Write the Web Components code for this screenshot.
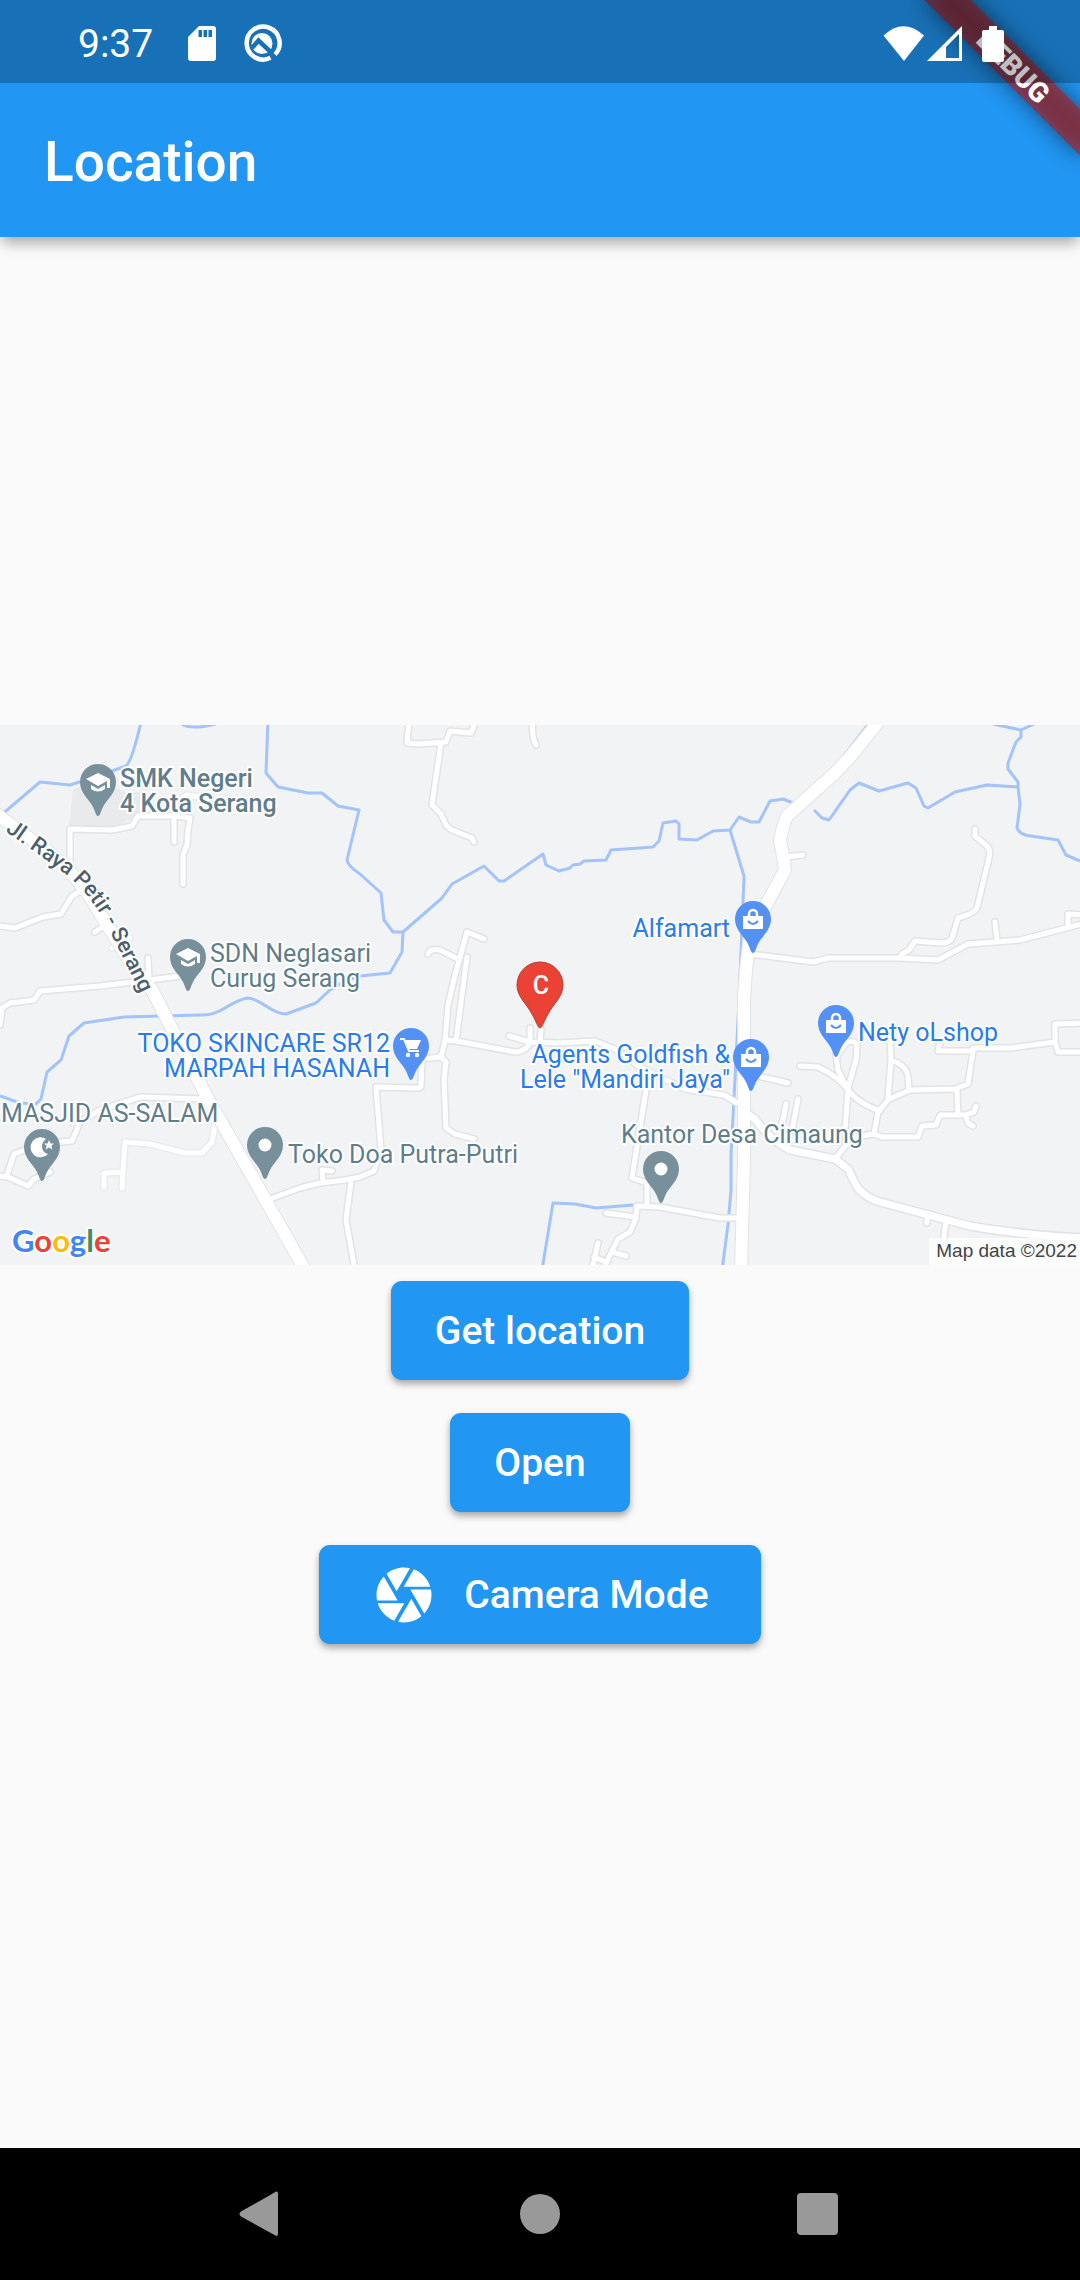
<!DOCTYPE html>
<html lang="en">
<head>
<meta charset="utf-8">
<meta name="viewport" content="width=device-width, initial-scale=1">
<title>Location</title>
<style>
  html, body { margin: 0; height: 100%; }
  body { font-family: Roboto, "Noto Sans", sans-serif; background: #fafafa; }
</style>
</head>
<body>
<location-page></location-page>
<script>
const define = (name, html) => {
  const template = document.createElement('template');
  template.innerHTML = html;
  customElements.define(name, class extends HTMLElement {
    constructor() {
      super();
      this.attachShadow({ mode: 'open' }).append(template.content.cloneNode(true));
    }
  });
};

define('status-bar', `
<style>
  :host { display: flex; align-items: center; justify-content: space-between; box-sizing: border-box;
          height: 83px; padding: 4px 76px 0 78px; color: #fff; background: rgba(0,0,0,.25); }
  .side { display: flex; align-items: center; }
  time { font-size: 39px; line-height: 44px; margin-right: 35px; }
  svg { display: block; fill: #fff; }
  .sd { margin-right: 26px; }
  .cell { margin: 0 20px 0 2px; }
</style>
<div class="side">
  <time>9:37</time>
  <svg class="sd" width="28" height="36" viewBox="0 0 28 36"><path fill-rule="evenodd" d="M11 0H25a3 3 0 0 1 3 3V32a3 3 0 0 1-3 3H3a3 3 0 0 1-3-3V11ZM10.500 4v7h3.500V4ZM15.500 4v7H19V4ZM20.500 4v7H24V4Z"/></svg>
  <svg width="40" height="40" viewBox="0 0 40 40">
    <mask id="slash"><rect width="40" height="40" fill="#fff"/><path d="M10 24L16.500 16.500L34 33" fill="none" stroke="#000" stroke-width="4.500"/></mask>
    <path fill="none" stroke="#fff" stroke-width="4.500" d="M33 30.500A16.500 16.500 0 1 0 28.500 33.800"/>
    <circle cx="20" cy="19.500" r="10.500" mask="url(#slash)"/>
  </svg>
</div>
<div class="side">
  <svg width="42" height="36" viewBox="0 0 42 36"><path d="M0.500 9.500Q20.500-9 41 9.500L21 35Z"/></svg>
  <svg class="cell" width="35" height="36" viewBox="0 0 35 36"><path fill-rule="evenodd" d="M35 0V35H0ZM32 8L19 21V32H32Z"/></svg>
  <svg width="22" height="36" viewBox="0 0 22 36"><path d="M7 0h8v4h5q2 0 2 2v28q0 2-2 2H2q-2 0-2-2V6q0-2 2-2h5Z"/></svg>
</div>`);

define('app-bar', `
<style>
  :host { display: flex; align-items: center; box-sizing: border-box; height: 154px; padding: 4px 44px 0; color: #fff; }
  h1 { margin: 0; font-size: 55px; line-height: 64px; font-weight: 500; }
</style>
<h1><slot></slot></h1>`);

define('debug-banner', `
<style>
  :host { display: block; width: 200px; height: 200px; overflow: hidden; pointer-events: none; }
  svg { display: block; }
  text { font: 900 28px Roboto, sans-serif; fill: #fff; text-anchor: middle; }
</style>
<svg width="200" height="200" viewBox="0 0 200 200">
  <defs><filter id="soft" x="-50%" y="-150%" width="200%" height="400%"><feGaussianBlur stdDeviation="11"/></filter></defs>
  <g transform="translate(200 0) rotate(45)">
    <rect x="-110" y="77" width="220" height="33" opacity=".5" filter="url(#soft)"/>
    <rect x="-120" y="77" width="240" height="33" fill="#b71c1c" fill-opacity=".627"/>
    <text x="0" y="104">DEBUG</text>
  </g>
</svg>`);

define('raised-button', `
<style>
  :host { display: block; }
  button { display: flex; align-items: center; justify-content: center; box-sizing: border-box; height: 99px;
           padding: 0 44px; border: 0; border-radius: 11px; background: #2196f3; color: #fff;
           font: 500 39px/46px Roboto, sans-serif; box-shadow: 0 4px 7px rgba(0,0,0,.34); cursor: pointer; }
  ::slotted(svg) { display: block; margin: 0 27px 0 8px; fill: #fff; }
  ::slotted(span) { margin-right: 8px; }
</style>
<button type="button"><slot></slot></button>`);

define('nav-bar', `
<style>
  :host { display: flex; align-items: center; justify-content: center; gap: 146px; height: 132px; background: #000; }
  button { display: flex; align-items: center; justify-content: center; width: 132px; height: 132px; border: 0;
           padding: 0; background: none; }
  svg { display: block; fill: #999; }
</style>
<button type="button" aria-label="Back"><svg width="48" height="48" viewBox="0 0 48 48"><path d="M36.500 2.500Q40 0 40 4V43.500Q40 47.500 36.500 45L3 26.500Q0 24 3 21.500Z"/></svg></button>
<button type="button" aria-label="Home"><svg width="48" height="48" viewBox="0 0 48 48"><circle cx="24" cy="24" r="20"/></svg></button>
<button type="button" aria-label="Recent apps"><svg width="48" height="48" viewBox="0 0 48 48"><rect x="3" y="3" width="41" height="42" rx="4"/></svg></button>`);

define('static-map', `
<style>
  :host { display: block; }
  svg { display: block; width: 100%; height: auto; }
  .water { fill: none; stroke: #a2c4fb; stroke-width: 3; stroke-linejoin: round; }
  .case, .road { fill: none; stroke-linecap: round; stroke-linejoin: round; }
  .case { stroke: #e1e3e7; stroke-width: 8; }
  .road { stroke: #fff; stroke-width: 5; }
  .case.wide { stroke-width: 10; } .road.wide { stroke-width: 7; }
  .case.main { stroke-width: 14; } .road.main { stroke-width: 12; }
  .faint { opacity: .5; }
  text { font: 400 25px Roboto, sans-serif; fill: #5f7d8b; paint-order: stroke; stroke: #fff; stroke-width: 4px; stroke-linejoin: round; }
  .bold { font-weight: 500; }
  .shop { fill: #2a7bec; }
  .end { text-anchor: end; }
  .street { font-size: 22px; font-weight: 500; fill: #4c5f6b; }
  .brand { font: 700 31px Lato, sans-serif; }
  .credit { font: 400 19px "Liberation Sans", Arial, sans-serif; fill: #444; stroke: none; }
  .letter { font-weight: 500; fill: #fff; stroke: none; text-anchor: middle; }
</style>
<svg viewBox="0 725 1080 540" role="img" aria-label="Map">
  <defs>
    <path id="pin" d="M0 34C-2 34-3 29-5 25C-9 17-18 11-18 0A18 18 0 1 1 18 0C18 11 9 17 5 25C3 29 2 34 0 34Z"/>
    <g id="school"><use href="#pin" fill="#78909c"/><path fill="#fff" d="M-12-3L0-9L12-3V6H9V-1L0 4Z"/><path fill="#fff" d="M-7 3L0 7L7 3V7Q0 12-7 7Z"/></g>
    <g id="place"><use href="#pin" fill="#78909c"/><circle r="6.500" fill="#fff"/></g>
    <g id="bag"><use href="#pin" fill="#5491f5"/><path fill="#fff" d="M-10-3H10V10H-10Z"/><path fill="none" stroke="#fff" stroke-width="2.500" d="M-4-3V-5a4 4 0 0 1 8 0V-3"/><path fill="none" stroke="#5491f5" stroke-width="2" d="M-5 2Q0 8 5 2"/></g>
    <g id="moon"><use href="#pin" fill="#78909c"/><path fill="#fff" d="M4-8A10 10 0 1 0 6 7A8 8 0 0 1 0-1Q0-5 4-8Z"/><path fill="#fff" d="M7-7L8.500-3.500L12-3.500L9.300-1.200L10.400 2.500L7 0.500L3.600 2.500L4.700-1.200L2-3.500L5.500-3.500Z"/></g>
    <g id="cart"><use href="#pin" fill="#5491f5"/><path fill="none" stroke="#fff" stroke-width="2" d="M-11-7H-7L-2 5H8"/><path fill="#fff" d="M-6-6H10L6 3H-3Z"/><circle cx="-3" cy="9" r="2.200" fill="#fff"/><circle cx="6" cy="9" r="2.200" fill="#fff"/></g>
    <path id="street" d="M5 831L35 852L68 876Q92 896 108 928L145 1002"/>
    <g id="lanes">
      <path d="M70 870V829L112 830L132 826L138 816H175L190 818L188 830L187 845L183 855V884M174 816V842"/>
      <path d="M0 926L15 928L43 917L61 914L72 896L85 888M95 932L107 924M148 958L149 980"/>
      <path d="M0 1025L2 1008L10 1003L34 1000L40 991L100 986L150 980L180 976"/>
      <path d="M409 720L407 743L418 744L446 742L450 731L471 733L476 720M441 743L432 805L441 814L446 825Q450 830 457 832L472 838L474 842M533 720Q531 735 536 745"/>
      <path d="M484 939L467 932L455 975L448 1005L445 1041L441 1057L446 1062L444 1080L446 1128L455 1134L474 1139M428 954Q430 948 440 950L458 959M467 957L460 1010L456 1041"/>
      <path d="M445 1040L456 1041L515 1052Q525 1052 531 1042M509 1036L530 1042L560 1043L595 1041L615 1049L640 1067L662 1078L685 1089L724 1095L737 1103H745M530 1042V1028M540 1043L541 1030"/>
      <path d="M441 1057L422 1059L421 1086Q421 1088 417 1088L376 1087L381 1150L374 1171L360 1177L345 1180L320 1183L300 1188L270 1199M323 1181L322 1170L332 1171M351 1182L346 1220L355 1270"/>
      <path d="M646 1090L638 1140L632 1178L647 1183V1206M637 1206L660 1207L720 1218H740M637 1206L636 1218L630 1232L618 1239L610 1255L603 1270M606 1213L636 1217M598 1243L592 1270M612 1252L626 1256M594 1257L606 1262"/>
      <path d="M0 1176L8 1177L28 1186L34 1179L50 1172M7 1175L14 1154L25 1150L50 1143L72 1141L80 1122L100 1110L140 1097L205 1099"/>
      <path d="M785 857L803 855M750 954L814 962L828 958H900L938 960L968 944L1020 940L1070 927L1085 923M1085 915L1068 914V926M975 829V836L987 846Q991 850 989 858L977 908Q975 913 958 918L952 938Q950 943 940 943L915 941L909 950L902 954L900 958M995 922L997 940"/>
      <path d="M1085 1023L1055 1024V1042L1058 1052H1085M1055 1042L1010 1048L973 1048V1051H938L940 1042M973 1051L968 1084L955 1089L910 1090L889 1099L878 1112L874 1134L882 1137H918L922 1126L936 1125L940 1115H965L974 1112L976 1106M957 1090L958 1115M966 1116L968 1123L973 1126M890 1040L891 1060L888 1098M891 1060Q908 1066 908 1078L909 1090M800 1066L818 1067Q838 1076 850 1092Q858 1103 880 1111M836 1055L838 1070L848 1090L845 1130L846 1145L836 1158M836 1057L845 1044Q852 1038 857 1045L856 1060L848 1088M874 1134L855 1137"/>
      <path d="M762 1077L788 1083M786 1104L782 1125M798 1099L792 1130M927 1218V1223M946 1222L943 1243"/>
    </g>
    <path id="side" d="M744 1112L755 1119Q770 1140 790 1150L835 1159L848 1169L857 1187Q866 1198 880 1202L970 1226Q1020 1235 1085 1238"/>
    <g id="main">
      <path d="M-5 813L35 842Q70 866 92 900L130 962L152 990L207 1097L240 1155L308 1275" />
      <path d="M884 715L850 757L835 773L788 815Q784 820 780 840L784 862L785 870L750 935L746 970L744 1000V1160L741 1270"/>
    </g>
    <g id="minor"><path d="M216 1120L212 1142L202 1153H185L150 1144L125 1142L122 1188M104 1187V1173L122 1172M180 800L187 795L200 797M112 948L130 938"/></g>
  </defs>
  <rect y="725" width="1080" height="540" fill="#f1f3f4"/>
  <path fill="#e8eaeb" d="M69 826L73 790L98 778L125 792H143L138 816L112 828Z"/>
  <g class="water">
    <path d="M0 816L40 782L70 785L95 777L126 766Q132 761 141 722M179 722Q188 731 216 724M268 720L266 773L278 787L308 793L322 793L338 806L359 810L347 860Q348 866 360 874L381 893L384 920L393 932L403 932L402 952L390 973L360 976Q345 980 330 990L316 1003L286 1014Q278 1014 266 1006T247 998Q238 1000 225 1008T200 1015L124 1017L84 1023L69 1036L61 1060L47 1072L41 1099L36 1104L20 1103L0 1096"/>
    <path d="M403 932L442 898L452 884L484 866L499 881L504 881L543 854L546 865L559 871L570 868L573 865L580 864L584 861L606 860L611 850L653 847L659 841L663 823L676 821L679 824V839L697 840L713 831L730 830L739 817L751 822H759L770 801L783 799L793 803M730 830L744 876L742 930L739 1000L736 1060L731 1155V1190L728 1225L722 1270"/>
    <path d="M814 810L822 818L829 820L850 790L859 783L879 791L908 783L916 788L924 806L928 808L955 792L987 785L1018 787M993 724L1021 730L1036 723M1021 730V737L1016 742L1008 763V769L1018 782V787L1020 804L1017 828Q1020 835 1031 836L1058 840L1066 855L1080 861M870 722L833 770M542 1270L553 1203L575 1204L596 1208L633 1205"/>
  </g>
  <g class="faint"><use href="#minor" class="case"/></g><use href="#minor" class="road"/>
  <use href="#lanes" class="case"/><use href="#side" class="case wide"/><use href="#main" class="case main"/>
  <use href="#lanes" class="road"/><use href="#side" class="road wide"/><use href="#main" class="road main"/>
  <text class="street"><textPath href="#street">Jl. Raya Petir - Serang</textPath></text>
  <text class="bold" x="120" y="787">SMK Negeri</text>
  <text class="bold" x="120" y="812">4 Kota Serang</text>
  <text x="210" y="962">SDN Neglasari</text>
  <text x="210" y="987">Curug Serang</text>
  <text class="shop end" x="390" y="1052">TOKO SKINCARE SR12</text>
  <text class="shop end" x="390" y="1077">MARPAH HASANAH</text>
  <text x="1" y="1122">MASJID AS-SALAM</text>
  <text x="288" y="1163">Toko Doa Putra-Putri</text>
  <text class="shop end" x="730" y="937">Alfamart</text>
  <text class="shop end" x="730" y="1063">Agents Goldfish &amp;</text>
  <text class="shop end" x="730" y="1088">Lele "Mandiri Jaya"</text>
  <text x="621" y="1143">Kantor Desa Cimaung</text>
  <text class="shop" x="858" y="1041">Nety oLshop</text>
  <use href="#school" x="98" y="782"/><use href="#school" x="188" y="957"/>
  <use href="#cart" x="411" y="1046"/><use href="#moon" x="42" y="1147"/>
  <use href="#place" x="265" y="1145"/><use href="#place" x="661" y="1169"/>
  <use href="#bag" x="753" y="919"/><use href="#bag" x="751" y="1057"/><use href="#bag" x="836" y="1023"/>
  <path fill="#ea4335" stroke="#b63a2f" d="M540 1028C538 1028 536 1021 532 1014C527 1004 517 997 517 985A23 23 0 1 1 563 985C563 997 553 1004 548 1014C544 1021 542 1028 540 1028Z"/>
  <text class="letter" x="541" y="994">C</text>
  <text class="brand" x="12" y="1252"><tspan fill="#4285f4">G</tspan><tspan fill="#ea4335">o</tspan><tspan fill="#fbbc05">o</tspan><tspan fill="#4285f4">g</tspan><tspan fill="#4c8a62">l</tspan><tspan fill="#ea4335">e</tspan></text>
  <rect x="929" y="1238" width="151" height="27" fill="#fff" fill-opacity=".7"/>
  <text class="credit end" x="1077" y="1257">Map data ©2022</text>
</svg>`);

define('location-page', `
<style>
  :host { display: flex; flex-direction: column; min-height: 100%; }
  header { position: relative; z-index: 1; background: #2196f3; box-shadow: 0 7px 14px -2px rgba(0,0,0,.36); }
  status-bar { position: relative; z-index: 2; }
  debug-banner { position: absolute; z-index: 1; top: 0; right: 0; }
  main { flex: 1; display: flex; flex-direction: column; justify-content: center; background: #fafafa; }
  .actions { display: flex; flex-direction: column; align-items: center; gap: 33px; padding: 16px; }
</style>
<header>
  <status-bar></status-bar>
  <app-bar>Location</app-bar>
  <debug-banner></debug-banner>
</header>
<main>
  <static-map></static-map>
  <div class="actions">
    <raised-button>Get location</raised-button>
    <raised-button>Open</raised-button>
    <raised-button><svg width="66" height="66" viewBox="0 0 24 24"><path d="M9.400 10.500l4.770-8.260C13.470 2.090 12.750 2 12 2c-2.400 0-4.600.850-6.320 2.250l3.660 6.350.060-.100zM21.540 9c-.920-2.920-3.150-5.260-6-6.340L11.880 9h9.660zm.260 1h-7.490l.290.500 4.760 8.250C21 16.970 22 14.610 22 12c0-.690-.070-1.350-.200-2zM8.540 12l-3.900-6.750C3.010 7.030 2 9.390 2 12c0 .690.070 1.350.200 2h7.490l-1.150-2zm-6.080 3c.920 2.920 3.150 5.260 6 6.340L12.120 15H2.460zm11.270 0l-3.900 6.760c.700.150 1.420.240 2.170.240 2.400 0 4.600-.850 6.320-2.250l-3.660-6.350-.930 1.600z"/></svg><span>Camera Mode</span></raised-button>
  </div>
</main>
<nav-bar></nav-bar>`);
</script>
</body>
</html>
